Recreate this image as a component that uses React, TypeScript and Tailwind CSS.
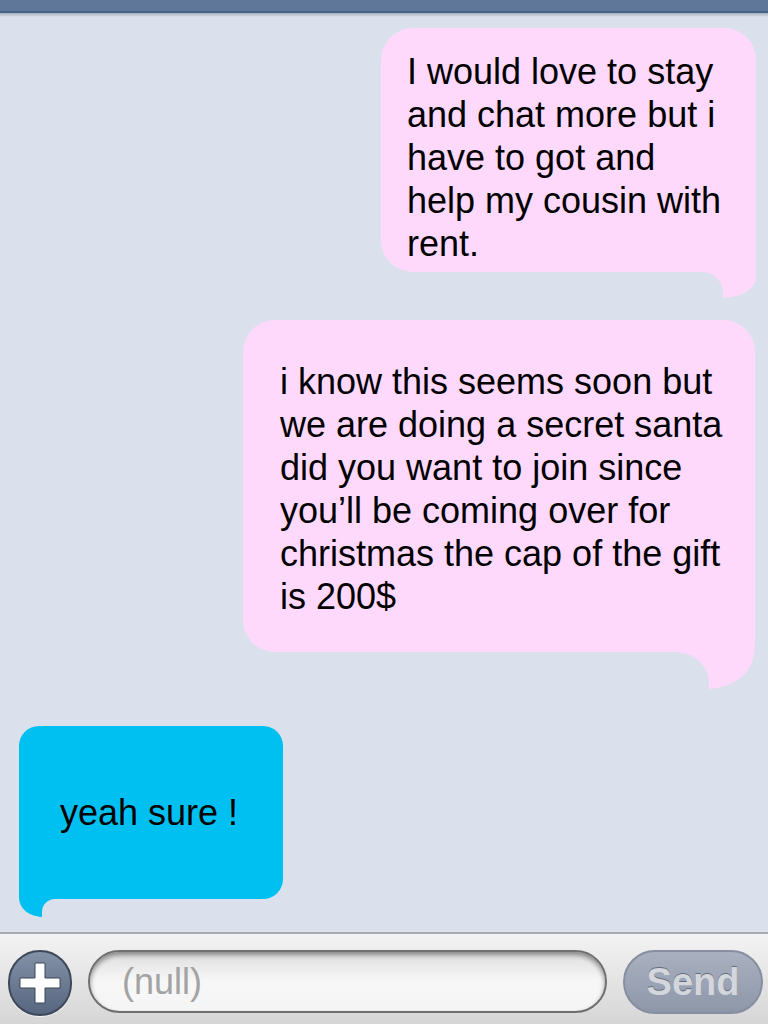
import React from "react";

const font = { fontFamily: '"Liberation Sans", Arial, sans-serif' };

const firstLines = [
  "I would love to stay",
  "and chat more but i",
  "have to got and",
  "help my cousin with",
  "rent.",
];

const secondLines = [
  "i know this seems soon but",
  "we are doing a secret santa",
  "did you want to join since",
  "you\u2019ll be coming over for",
  "christmas the cap of the gift",
  "is 200$",
];

function Lines({ lines }: { lines: string[] }) {
  return (
    <>
      {lines.map((line) => (
        <span key={line} className="block whitespace-nowrap">
          {line}
        </span>
      ))}
    </>
  );
}

function App() {
  return (
    <div
      className="w-[768px] h-[1024px] flex flex-col bg-[#dbe1ec] overflow-hidden"
      style={font}
    >
      {/* top nav strip */}
      <div className="h-[11px] bg-[#5f7899]" />
      <div className="h-[2px] bg-[#47628a]" />
      <div className="h-[4px] bg-gradient-to-b from-[#a7b0bf] to-[#dbe1ec]" />

      {/* conversation */}
      <div className="flex-1 flex flex-col text-[36px] leading-[43px] text-black">
        <div className="relative self-end mt-[11px] mr-[12px] w-[375px] h-[244px] rounded-[32px] bg-[#fed9fb] pt-[22px] pl-[26px]">
          <svg
            className="absolute right-0 top-[208px]"
            width="56"
            height="62"
            viewBox="0 0 56 62"
          >
            <path
              d="M56 0 L56 40 C56 52 46 60 23 62 L23 58 A21 21 0 0 0 2 36 L0 36 L0 0 Z"
              fill="#fed9fb"
            />
          </svg>
          <div className="relative">
            <Lines lines={firstLines} />
          </div>
        </div>

        <div className="relative self-end mt-[48px] mr-[13px] w-[512px] h-[332px] rounded-[32px] bg-[#fed9fb] pt-[40px] pl-[37px]">
          <svg
            className="absolute right-0 top-[293px]"
            width="75"
            height="76"
            viewBox="0 0 75 76"
          >
            <path
              d="M75 0 L75 30 C75 55 62 73 29 76 L29 70 A30 30 0 0 0 0 40 L0 0 Z"
              fill="#fed9fb"
            />
          </svg>
          <div className="relative">
            <Lines lines={secondLines} />
          </div>
        </div>

        <div className="relative self-start mt-[74px] ml-[19px] w-[264px] h-[173px] rounded-[20px] bg-[#00c0f2] pl-[41px] flex items-center">
          <svg
            className="absolute left-0 top-[141px]"
            width="45"
            height="50"
            viewBox="0 0 45 50"
          >
            <path
              d="M0 0 L0 30 C0 42 10 49 23 50 L23 45 A13 13 0 0 1 36 32 L45 32 L45 0 Z"
              fill="#00c0f2"
            />
          </svg>
          <span className="relative whitespace-nowrap">yeah sure !</span>
        </div>
      </div>

      {/* compose bar */}
      <div className="h-[92px] border-t-2 border-[#a6a9ad] bg-gradient-to-b from-[#f3f3f3] to-[#d6d6d6] flex items-start pt-[16px] pl-[8px] gap-[16px]">
        <div className="w-[64px] h-[66px] rounded-full border-2 border-[#3d495b] bg-gradient-to-b from-[#8492a8] to-[#56667e] flex items-center justify-center shadow-[0_1px_1px_rgba(255,255,255,0.8)]">
          <svg width="42" height="42" viewBox="0 0 42 42">
            <g fill="#ffffff" stroke="#3d4656" strokeWidth="1">
              <path d="M16 1 H26 V16 H41 V26 H26 V41 H16 V26 H1 V16 H16 Z" />
            </g>
          </svg>
        </div>

        <div className="w-[519px] h-[63px] rounded-full border-2 border-[#6f6f6f] bg-gradient-to-b from-[#dedede] via-[#f7f7f7] to-[#f5f5f5] shadow-[inset_0_3px_5px_rgba(0,0,0,0.4)] flex items-center pl-[32px]">
          <span className="text-[36px] text-[#a3a3a3]">(null)</span>
        </div>

        <div className="w-[140px] h-[64px] rounded-full border-2 border-[#868ea0] bg-gradient-to-b from-[#a9b1c0] to-[#8e97a9] flex items-center justify-center">
          <span className="text-[38px] font-bold text-[#d3d6dc] [text-shadow:0_-1px_0_rgba(60,66,80,0.6)]">
            Send
          </span>
        </div>
      </div>
    </div>
  );
}

export default App;
